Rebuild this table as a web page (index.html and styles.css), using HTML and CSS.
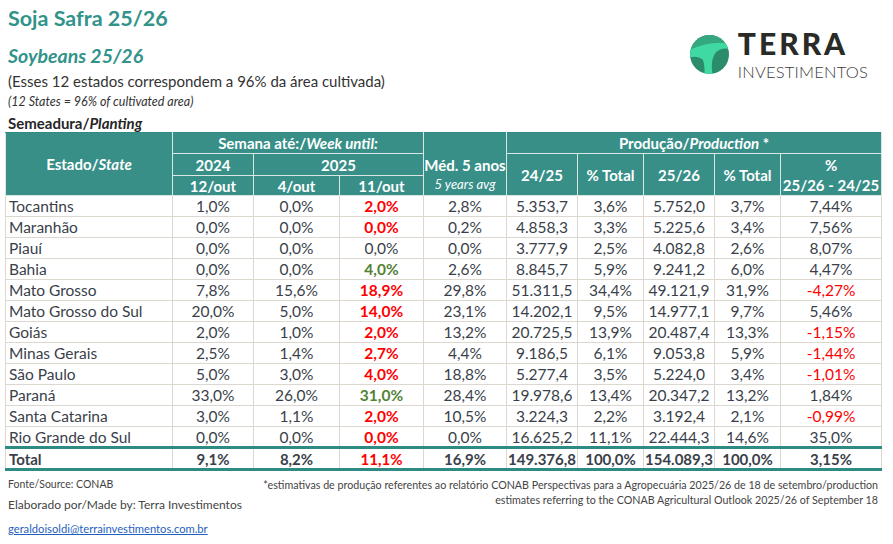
FILE: index.html
```html
<!DOCTYPE html>
<html lang="pt-BR">
<head>
<meta charset="utf-8">
<title>Soja Safra 25/26</title>
<link rel="stylesheet" href="styles.css">
</head>
<body>
<div class="page">
  <header class="top">
    <div class="titles">
      <h1 class="title">Soja Safra 25/26</h1>
      <h2 class="subtitle">Soybeans 25/26</h2>
      <p class="note">(Esses 12 estados correspondem a 96% da área cultivada)</p>
      <p class="note-en">(12 States = 96% of cultivated area)</p>
      <p class="section">Semeadura/<i>Planting</i></p>
    </div>
    <div class="logo">
      <svg class="logo-mark" viewBox="0 0 40 40" width="39" height="39" aria-hidden="true">
        <defs><clipPath id="lc"><circle cx="20" cy="20" r="20"/></clipPath></defs>
        <g clip-path="url(#lc)">
          <rect width="40" height="40" fill="#2a8c6a"/>
          <path d="M0,0 H40 V9 Q22,5 0,15 Z" fill="#35a880"/>
          <path d="M0,15 Q22,5 40,9 V14 Q29,13 25,20 Q21,28 23,40 H15 Q15,29 13,25 Q8,21 0,23 Z" fill="#41d9a2"/>
        </g>
      </svg>
      <div class="logo-text">
        <span class="logo-name">TERRA</span>
        <span class="logo-sub">INVESTIMENTOS</span>
      </div>
    </div>
  </header>

  <table class="grid">
    <colgroup>
      <col style="width:167px"><col style="width:81px"><col style="width:86px"><col style="width:84px"><col style="width:83px">
      <col style="width:71px"><col style="width:66px"><col style="width:71px"><col style="width:66px"><col style="width:101px">
    </colgroup>
    <thead>
      <tr class="hr1">
        <th rowspan="3">Estado/<i>State</i></th>
        <th colspan="3">Semana até:/<i>Week until:</i></th>
        <th rowspan="3" class="avg"><span class="avg-main">Méd. 5 anos</span><span class="avg-sub">5 years avg</span></th>
        <th colspan="5">Produção/<i>Production</i> *</th>
      </tr>
      <tr class="hr2">
        <th>2024</th>
        <th colspan="2">2025</th>
        <th rowspan="2">24/25</th>
        <th rowspan="2">% Total</th>
        <th rowspan="2">25/26</th>
        <th rowspan="2">% Total</th>
        <th rowspan="2" class="two">%<br>25/26 - 24/25</th>
      </tr>
      <tr class="hr3">
        <th>12/out</th>
        <th>4/out</th>
        <th>11/out</th>
      </tr>
    </thead>
    <tbody>
      <tr><td class="st">Tocantins</td><td>1,0%</td><td>0,0%</td><td class="red">2,0%</td><td>2,8%</td><td>5.353,7</td><td>3,6%</td><td>5.752,0</td><td>3,7%</td><td>7,44%</td></tr>
      <tr><td class="st">Maranhão</td><td>0,0%</td><td>0,0%</td><td class="red">0,0%</td><td>0,2%</td><td>4.858,3</td><td>3,3%</td><td>5.225,6</td><td>3,4%</td><td>7,56%</td></tr>
      <tr><td class="st">Piauí</td><td>0,0%</td><td>0,0%</td><td>0,0%</td><td>0,0%</td><td>3.777,9</td><td>2,5%</td><td>4.082,8</td><td>2,6%</td><td>8,07%</td></tr>
      <tr><td class="st">Bahia</td><td>0,0%</td><td>0,0%</td><td class="green">4,0%</td><td>2,6%</td><td>8.845,7</td><td>5,9%</td><td>9.241,2</td><td>6,0%</td><td>4,47%</td></tr>
      <tr><td class="st">Mato Grosso</td><td>7,8%</td><td>15,6%</td><td class="red">18,9%</td><td>29,8%</td><td>51.311,5</td><td>34,4%</td><td>49.121,9</td><td>31,9%</td><td class="neg">-4,27%</td></tr>
      <tr><td class="st">Mato Grosso do Sul</td><td>20,0%</td><td>5,0%</td><td class="red">14,0%</td><td>23,1%</td><td>14.202,1</td><td>9,5%</td><td>14.977,1</td><td>9,7%</td><td>5,46%</td></tr>
      <tr><td class="st">Goiás</td><td>2,0%</td><td>1,0%</td><td class="red">2,0%</td><td>13,2%</td><td>20.725,5</td><td>13,9%</td><td>20.487,4</td><td>13,3%</td><td class="neg">-1,15%</td></tr>
      <tr><td class="st">Minas Gerais</td><td>2,5%</td><td>1,4%</td><td class="red">2,7%</td><td>4,4%</td><td>9.186,5</td><td>6,1%</td><td>9.053,8</td><td>5,9%</td><td class="neg">-1,44%</td></tr>
      <tr><td class="st">São Paulo</td><td>5,0%</td><td>3,0%</td><td class="red">4,0%</td><td>18,8%</td><td>5.277,4</td><td>3,5%</td><td>5.224,0</td><td>3,4%</td><td class="neg">-1,01%</td></tr>
      <tr><td class="st">Paraná</td><td>33,0%</td><td>26,0%</td><td class="green">31,0%</td><td>28,4%</td><td>19.978,6</td><td>13,4%</td><td>20.347,2</td><td>13,2%</td><td>1,84%</td></tr>
      <tr><td class="st">Santa Catarina</td><td>3,0%</td><td>1,1%</td><td class="red">2,0%</td><td>10,5%</td><td>3.224,3</td><td>2,2%</td><td>3.192,4</td><td>2,1%</td><td class="neg">-0,99%</td></tr>
      <tr><td class="st">Rio Grande do Sul</td><td>0,0%</td><td>0,0%</td><td class="red">0,0%</td><td>0,0%</td><td>16.625,2</td><td>11,1%</td><td>22.444,3</td><td>14,6%</td><td>35,0%</td></tr>
    </tbody>
    <tfoot>
      <tr><td class="st">Total</td><td>9,1%</td><td>8,2%</td><td class="red">11,1%</td><td>16,9%</td><td>149.376,8</td><td>100,0%</td><td>154.089,3</td><td>100,0%</td><td>3,15%</td></tr>
    </tfoot>
  </table>

  <footer class="foot">
    <div class="foot-left">
      <p class="src">Fonte/Source: CONAB</p>
      <p class="made">Elaborado por/Made by: Terra Investimentos</p>
      <p class="contact"><a class="mail" href="mailto:geraldoisoldi@terrainvestimentos.com.br">geraldoisoldi@terrainvestimentos.com.br</a></p>
    </div>
    <div class="foot-right">
      <p>*estimativas de produção referentes ao relatório CONAB Perspectivas para a Agropecuária 2025/26 de 18 de setembro/production</p>
      <p>estimates referring to the CONAB Agricultural Outlook 2025/26 of September 18</p>
    </div>
  </footer>
</div>
</body>
</html>
```
FILE: styles.css
```css
* { box-sizing: border-box; }
html, body { margin: 0; padding: 0; background: #ffffff; }
body {
  font-family: Lato, "Noto Sans", "Liberation Sans", sans-serif;
  color: #3a3f4a;
  width: 893px;
  height: 544px;
  overflow: hidden;
}
p, h1, h2 { margin: 0; font-weight: normal; }

.page { padding: 3px 12px 0 5px; }

.top { display: flex; justify-content: space-between; align-items: flex-start; }
.titles { padding-left: 3px; }
.title {
  font-size: 21.5px; line-height: 30px; font-weight: 700; color: #31938a;
}
.subtitle {
  margin-top: 11px;
  font-size: 19.5px; line-height: 24px; font-weight: 700; font-style: italic; color: #31938a;
}
.note { margin-top: 4px; font-size: 15px; line-height: 18px; color: #333; }
.note-en { margin-top: 5px; font-size: 12.5px; line-height: 14px; font-style: italic; color: #333; }
.section { margin-top: 5px; font-size: 15px; line-height: 18px; font-weight: 700; color: #262626; }
.section i { font-weight: 700; }

.logo { display: flex; align-items: center; gap: 9px; margin-top: 25px; margin-right: 13px; }
.logo-mark { display: block; }
.logo-text { display: flex; flex-direction: column; }
.logo-name {
  font-size: 30px; line-height: 30px; font-weight: 900; color: #2a2a26; letter-spacing: 3px;
}
.logo-sub {
  margin-top: 5px; font-size: 16.5px; line-height: 18px; font-weight: 300; color: #3c3c3c; letter-spacing: 0.2px;
}

.grid {
  border-collapse: collapse;
  table-layout: fixed;
  width: 876px;
  font-size: 15.5px;
  color: #3a3f4a;
}
.grid th {
  background: #388f88;
  color: #ffffff;
  font-weight: 700;
  font-size: 15px;
  border: 1px solid #d6e7e4;
  padding: 0;
  text-align: center;
  white-space: nowrap;
}
.grid thead tr.hr1 th { height: 21px; border-top: 1px solid #2e8b84; }
.grid thead tr.hr2 th { height: 22px; }
.grid thead tr.hr3 th { height: 20px; }
.grid th.avg { vertical-align: bottom; padding-bottom: 2px; }
.avg-main { display: block; line-height: 20px; }
.avg-sub { display: block; line-height: 18px; font-weight: 400; font-style: italic; font-size: 13px; }
.grid th.two { line-height: 20px; }

.grid td {
  height: 21px;
  padding: 0;
  border: 1px solid #dcd8d0;
  text-align: center;
  white-space: nowrap;
}
.grid td.st { text-align: left; padding-left: 3px; }
.grid td.red { color: #ff0000; font-weight: 700; }
.grid td.green { color: #548235; font-weight: 700; }
.grid td.neg { color: #ff0000; }
.grid tfoot td {
  height: 22px;
  font-size: 15px;
  font-weight: 700;
  border-top: 3px solid #2e8b84;
  border-bottom: 3px solid #2e8b84;
}

.foot { display: flex; justify-content: space-between; align-items: flex-start; }
.foot-left { padding-left: 3px; padding-top: 3px; font-size: 11.5px; color: #444; }
.foot-left p { line-height: 21px; }
.foot-left p.src { font-size: 10.5px; }
.foot-left p.made { font-size: 12px; line-height: 20px; }
.foot-left p.contact { margin-top: 3px; font-size: 11.2px; }
.mail { color: #1f5fc0; text-decoration: underline; }
.foot-right { padding-top: 6px; font-size: 10.7px; color: #444; text-align: right; padding-right: 3px; }
.foot-right p { line-height: 15px; }
```
